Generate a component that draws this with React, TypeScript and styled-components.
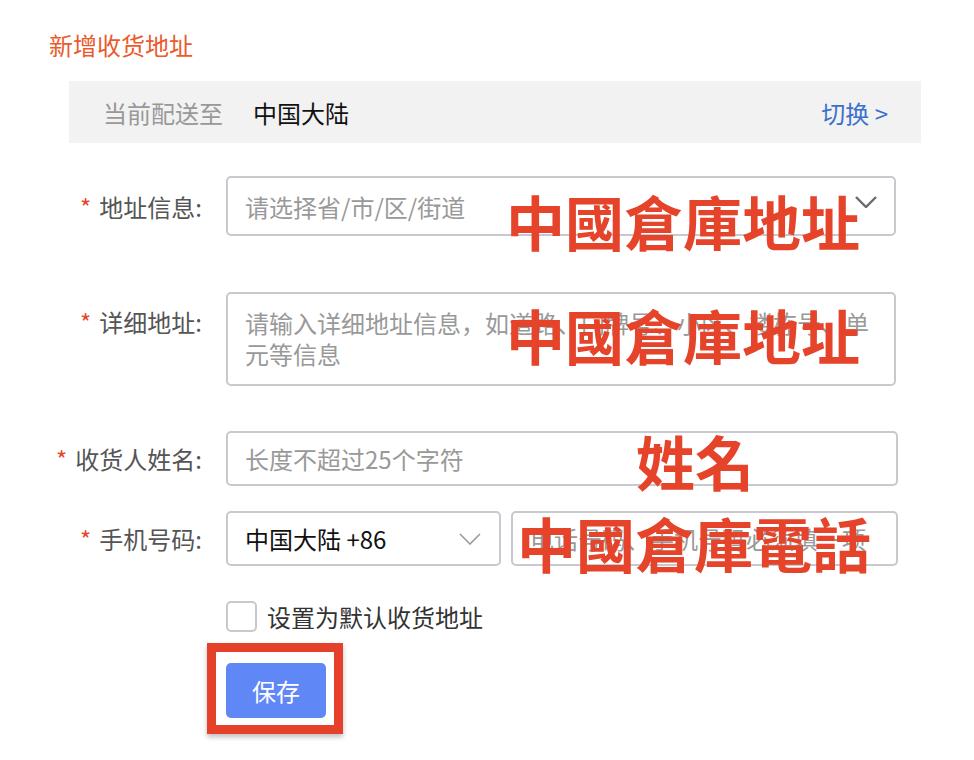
import React, { useState } from "react";
import styled, { createGlobalStyle } from "styled-components";

const GlobalStyle = createGlobalStyle`
  html, body {
    margin: 0;
    padding: 0;
    background: #ffffff;
  }
  body {
    font-family: "Noto Sans CJK SC", "Noto Sans", sans-serif;
  }
`;

export default function App() {
  const [isDefault, setIsDefault] = useState<boolean>(false);

  return (
    <>
      <GlobalStyle />
      <Page>
        <Title>新增收货地址</Title>
        <RegionBar>
          <RegionLabel>当前配送至</RegionLabel>
          <RegionValue>中国大陆</RegionValue>
          <SwitchLink href="#">切换 &gt;</SwitchLink>
        </RegionBar>

        <Form>
          <Row $mt={33}>
            <Label>
              <Star>*</Star>地址信息:
            </Label>
            <SelectBox $h={60}>
              <Placeholder>请选择省/市/区/街道</Placeholder>
              <Chevron $dark />
            </SelectBox>
            <Stamp $left={280} $top={10}>中國倉庫地址</Stamp>
          </Row>

          <Row $mt={56} $top>
            <Label $top>
              <Star>*</Star>详细地址:
            </Label>
            <TextArea>请输入详细地址信息，如道路、门牌号、小区、楼栋号、单元等信息</TextArea>
            <Stamp $left={280} $top={8}>中國倉庫地址</Stamp>
          </Row>

          <Row $mt={45}>
            <Label>
              <Star>*</Star>收货人姓名:
            </Label>
            <TextInput $h={55}>
              <Placeholder>长度不超过25个字符</Placeholder>
            </TextInput>
            <Stamp $left={410} $top={-5}>姓名</Stamp>
          </Row>

          <Row $mt={25}>
            <Label>
              <Star>*</Star>手机号码:
            </Label>
            <PhoneGroup>
              <SelectBox $h={55} $w={275}>
                <Value>中国大陆 +86</Value>
                <Chevron />
              </SelectBox>
              <TextInput $h={55} $grow>
                <Placeholder>电话号码、手机号码必须填一项</Placeholder>
              </TextInput>
            </PhoneGroup>
            <Stamp $left={291} $top={-3}>中國倉庫電話</Stamp>
          </Row>

          <Row $mt={33}>
            <span />
            <CheckRow onClick={() => setIsDefault(!isDefault)}>
              <CheckBox $checked={isDefault} />
              <CheckText>设置为默认收货地址</CheckText>
            </CheckRow>
          </Row>

          <Row $mt={29}>
            <span />
            <ButtonWrap>
              <SaveButton>保存</SaveButton>
              <Highlight />
            </ButtonWrap>
          </Row>
        </Form>
      </Page>
    </>
  );
}

function Chevron({ $dark }: { $dark?: boolean }) {
  return (
    <ChevronIcon
      width="22"
      height="12"
      viewBox="0 0 22 12"
      fill="none"
      stroke={$dark ? "#6b6b6b" : "#9a9a9a"}
      strokeWidth={$dark ? 2.4 : 1.6}
      $dark={$dark}
    >
      <polyline points="1,1 11,11 21,1" />
    </ChevronIcon>
  );
}

const Page = styled.div`
  width: 974px;
  height: 760px;
  padding: 29px 0 0 49px;
  box-sizing: border-box;
  font-size: 24px;
  color: #333;
`;

const Title = styled.div`
  color: #ea5a2c;
  font-size: 24px;
  line-height: 32px;
`;

const RegionBar = styled.div`
  display: flex;
  align-items: center;
  margin: 20px 0 0 20px;
  width: 852px;
  height: 62px;
  padding: 0 33px 0 34px;
  box-sizing: border-box;
  background: #f2f2f2;
`;

const RegionLabel = styled.span`
  color: #999;
  font-size: 24px;
  width: 150px;
`;

const RegionValue = styled.span`
  color: #111;
  font-size: 24px;
  flex: 1;
`;

const SwitchLink = styled.a`
  color: #3b70cc;
  font-size: 24px;
  text-decoration: none;
`;

const Form = styled.div`
  display: flex;
  flex-direction: column;
`;

const Row = styled.div<{ $mt: number; $top?: boolean }>`
  position: relative;
  display: grid;
  grid-template-columns: 153px 672px;
  column-gap: 24px;
  align-items: ${(p) => (p.$top ? "start" : "center")};
  margin-top: ${(p) => p.$mt}px;
`;

const Label = styled.label<{ $top?: boolean }>`
  text-align: right;
  color: #555;
  font-size: 24px;
  white-space: nowrap;
  margin-top: ${(p) => (p.$top ? "12px" : "0")};
`;

const Star = styled.span`
  color: #e8452c;
  margin-right: 8px;
`;

const Field = styled.div<{ $h: number; $w?: number; $grow?: boolean }>`
  position: relative;
  display: flex;
  align-items: center;
  height: ${(p) => p.$h}px;
  width: ${(p) => (p.$w ? `${p.$w}px` : "auto")};
  flex: ${(p) => (p.$grow ? 1 : "none")};
  padding: 0 17px;
  box-sizing: border-box;
  border: 2px solid #c8c8ce;
  border-radius: 5px;
  background: #fff;
`;

const SelectBox = styled(Field)`
  justify-content: space-between;
  margin-right: 2px;
`;

const TextInput = styled(Field)``;

const Placeholder = styled.span`
  color: #999;
  font-size: 24px;
  white-space: nowrap;
  overflow: hidden;
`;

const Value = styled.span`
  color: #111;
  font-size: 24px;
`;

const ChevronIcon = styled.svg<{ $dark?: boolean }>`
  flex: none;
  align-self: ${(p) => (p.$dark ? "flex-start" : "center")};
  margin-top: ${(p) => (p.$dark ? "18px" : "0")};
  margin-right: ${(p) => (p.$dark ? "0" : "1px")};
`;

const TextArea = styled.div`
  height: 94px;
  width: 670px;
  padding: 13px 17px;
  box-sizing: border-box;
  border: 2px solid #c8c8ce;
  border-radius: 5px;
  color: #999;
  font-size: 24px;
  line-height: 31px;
`;

const PhoneGroup = styled.div`
  display: flex;
  gap: 8px;
`;

const CheckRow = styled.div`
  display: flex;
  align-items: center;
  gap: 10px;
  cursor: pointer;
`;

const CheckBox = styled.span<{ $checked: boolean }>`
  width: 31px;
  height: 31px;
  box-sizing: border-box;
  border: 2px solid #c8c8ce;
  border-radius: 5px;
  background: ${(p) => (p.$checked ? "#5b87f5" : "#fff")};
`;

const CheckText = styled.span`
  color: #333;
  font-size: 24px;
`;

const ButtonWrap = styled.div`
  position: relative;
  width: 100px;
`;

const SaveButton = styled.button`
  width: 100px;
  height: 55px;
  border: none;
  border-radius: 5px;
  background: #5f88f6;
  color: #fff;
  font-family: "Noto Sans CJK SC", sans-serif;
  font-size: 24px;
  cursor: pointer;
`;

const Highlight = styled.div`
  position: absolute;
  left: -19px;
  top: -20px;
  width: 136px;
  height: 91px;
  box-sizing: border-box;
  border: 9px solid #e5412a;
  box-shadow: 0 3px 5px rgba(0, 0, 0, 0.25);
  pointer-events: none;
`;

const Stamp = styled.div<{ $left: number; $top: number }>`
  position: absolute;
  left: ${(p) => p.$left + 177}px;
  top: ${(p) => p.$top}px;
  color: #e5432a;
  font-family: "Noto Sans CJK TC", "Noto Sans CJK SC", sans-serif;
  font-weight: 700;
  font-size: 59px;
  line-height: 70px;
  white-space: nowrap;
  pointer-events: none;
`;
